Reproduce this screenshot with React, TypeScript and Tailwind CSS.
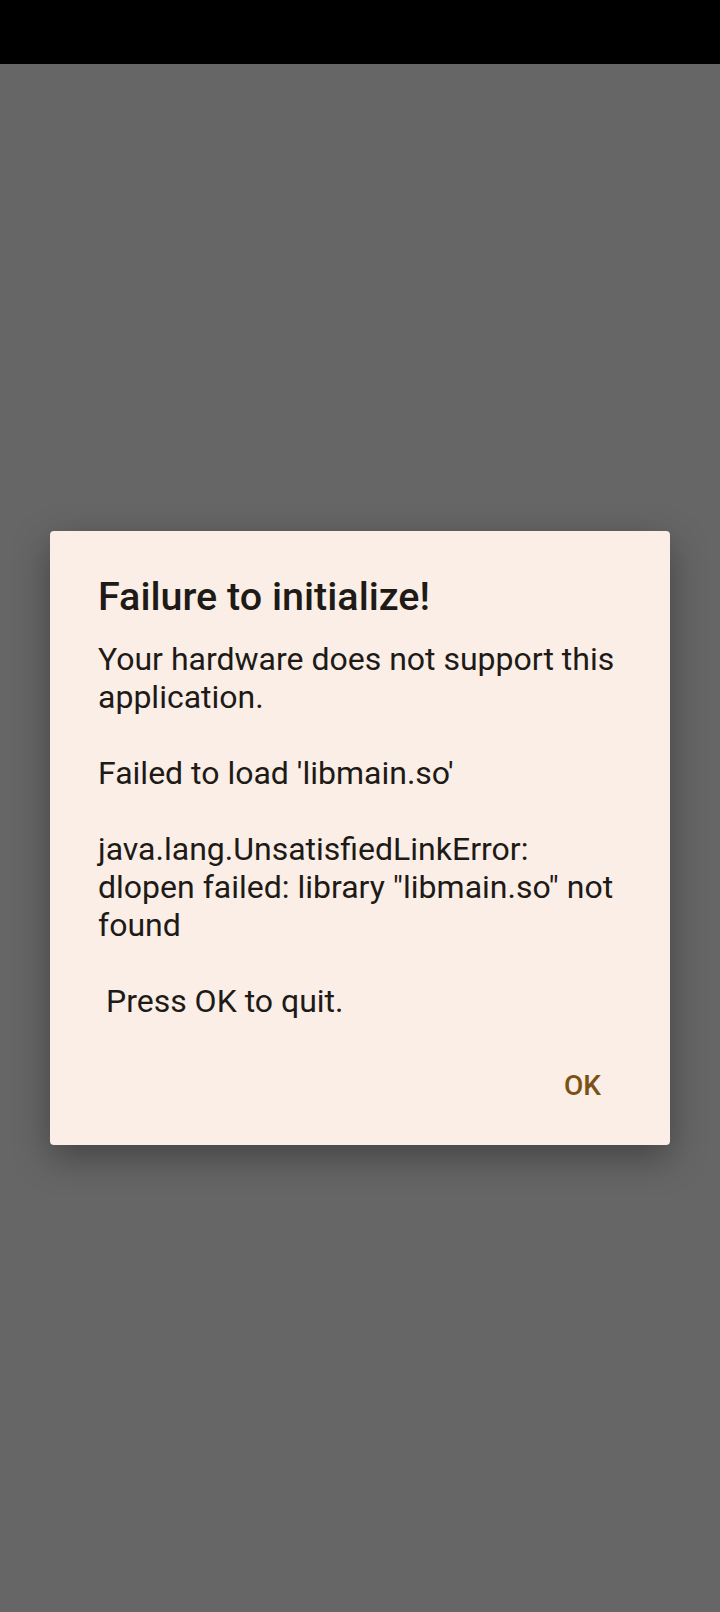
export default function App() {
  return (
    <div
      className="flex h-[1612px] w-[720px] flex-col bg-[#666666]"
      style={{ fontFamily: 'Roboto, "Noto Sans", sans-serif' }}
    >
      <div className="h-[64px] shrink-0 bg-black" />
      <div className="flex flex-1 items-center justify-center">
        <div className="w-[620px] rounded-[4px] bg-[#faeee6] px-[48px] pt-[42px] pb-[43px] shadow-[0_12px_36px_rgba(0,0,0,0.35)]">
          <h1 className="text-[39.5px] leading-[47px] font-medium text-[#201a17]">
            Failure to initialize!
          </h1>
          <p className="mt-[20px] whitespace-pre-wrap text-[32px] leading-[38px] text-[#201a17]">
            {
              'Your hardware does not support this application.\n\nFailed to load \'libmain.so\'\n\njava.lang.UnsatisfiedLinkError: dlopen failed: library "libmain.so" not found\n\n Press OK to quit.'
            }
          </p>
          <div className="mt-[49px] flex justify-end pr-[21px]">
            <button className="text-[28px] leading-[33px] font-medium text-[#7b5215]">OK</button>
          </div>
        </div>
      </div>
    </div>
  );
}
